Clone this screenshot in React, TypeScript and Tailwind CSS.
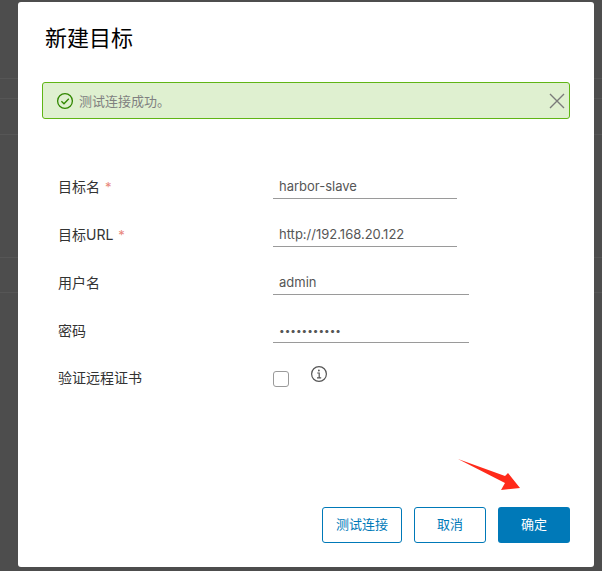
import React from 'react';

const FONT = 'font-["Inter","Noto_Sans_CJK_SC",sans-serif]';

const FormRow = ({ label, required, value, wide, dots }: { label: string; required?: boolean; value: string; wide?: boolean; dots?: boolean }) => (
  <div className="flex h-[48px] items-start">
    <label className="flex w-[215px] pt-[9px] text-[14px] leading-[18px] text-[#333]">
      {label}
      {required && <span className="ml-[5px] text-[13px] text-[#e8867a]">*</span>}
    </label>
    <div className={`h-[30px] border-b border-[#9a9a9a] px-[6px] pt-[8px] leading-[18px] text-[#565656] ${dots ? 'text-[10px]' : 'text-[13px]'} ${wide ? 'w-[196px]' : 'w-[184px]'}`}>
      {value}
    </div>
  </div>
);

export default function App() {
  return (
    <div className={`relative h-[571px] w-[602px] overflow-hidden bg-[#4d4d4d] ${FONT}`}>
      <div className="flex h-full flex-col">
        <div className="h-[79px] border-b border-[#565656]" />
        <div className="h-[20px] border-b border-[#565656]" />
        <div className="h-[36px] border-b border-[#565656]" />
        <div className="h-[123px] border-b border-[#565656]" />
        <div className="h-[35px] border-b border-[#565656]" />
      </div>

      <div className="absolute left-[18px] top-[2px] flex h-[565px] w-[576px] flex-col rounded-[3px] bg-white px-[24px] pt-[20px]">
        <h3 className="pl-[3px] text-[22px] font-normal leading-[32px] text-black">新建目标</h3>

        <div className="mt-[28px] flex h-[37px] items-center rounded-[3px] border border-[#60b515] bg-[#dff0d0] pl-[14px] pr-[3px]">
          <svg className="-ml-[1px]" width="18" height="18" viewBox="0 0 18 18" fill="none" stroke="#318700" strokeWidth="1.3">
            <circle cx="9" cy="9" r="7.4" />
            <path d="M5.4 9.2l2.6 2.6 4.8-5" />
          </svg>
          <span className="ml-[5px] flex-1 text-[13px] leading-[18px] text-[#808080]">测试连接成功。</span>
          <svg width="18" height="18" viewBox="0 0 18 18" fill="none" stroke="#7a7a7a" strokeWidth="1.4">
            <path d="M2 2l14 14M16 2L2 16" />
          </svg>
        </div>

        <div className="mt-[50px] pl-[16px]">
          <FormRow label="目标名" required value="harbor-slave" />
          <FormRow label="目标URL" required value="http://192.168.20.122" />
          <FormRow label="用户名" value="admin" wide />
          <FormRow label="密码" value="•••••••••••" wide dots />
          <div className="flex items-start">
            <label className="w-[215px] pt-[8px] text-[14px] leading-[18px] text-[#333]">验证远程证书</label>
            <span className="mt-[10px] h-[16px] w-[16px] rounded-[3px] border border-[#9a9a9a]" />
            <svg className="ml-[21px] mt-[4px]" width="18" height="18" viewBox="0 0 18 18" fill="none" stroke="#555" strokeWidth="1.2">
              <circle cx="9" cy="9" r="7.4" />
              <path d="M7.2 8h2v4.8M7 12.8h4.2" />
              <circle cx="8.9" cy="5.5" r="0.9" fill="#555" stroke="none" />
            </svg>
          </div>
        </div>

        <div className="mt-auto mb-[24px] flex justify-end gap-[12px]">
          <button className="h-[36px] w-[80px] rounded-[3px] border border-[#0079b8] text-[13px] text-[#0079b8]">测试连接</button>
          <button className="h-[36px] w-[72px] rounded-[3px] border border-[#0079b8] text-[13px] text-[#0079b8]">取消</button>
          <button className="h-[36px] w-[72px] rounded-[3px] bg-[#0079b8] text-[13px] text-white">确定</button>
        </div>
      </div>

      {/* red annotation arrow */}
      <svg className="absolute left-[456px] top-[456px]" width="66" height="36" viewBox="0 0 66 36">
        <path d="M2 3L49 20L52 17L64 32L45 34L49 27Z" fill="#ff2a1a" />
      </svg>
    </div>
  );
}
